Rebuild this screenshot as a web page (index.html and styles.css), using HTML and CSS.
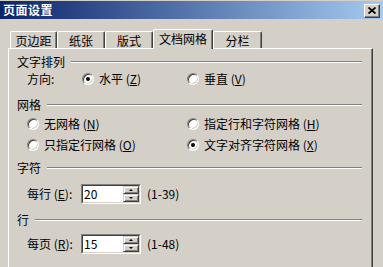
FILE: index.html
```html
<!DOCTYPE html>
<html lang="zh-CN">
<head>
  <meta charset="UTF-8">
  <title>页面设置</title>
  <link rel="stylesheet" href="styles.css">
</head>
<body>
  <div class="dialog">
    <div class="titlebar">
      <span class="title">页面设置</span>
      <span class="close">
        <svg width="8" height="7" viewBox="0 0 8 7"><path d="M0.5 0.5L7.5 6.5M7.5 0.5L0.5 6.5" stroke="#000" stroke-width="1.7"/></svg>
      </span>
    </div>

    <div class="tabs">
      <div class="tab w47">页边距</div>
      <div class="tab w48">纸张</div>
      <div class="tab w48">版式</div>
      <div class="tab active">文档网格</div>
      <div class="tab w49">分栏</div>
    </div>

    <div class="panel">
      <div class="group-head first"><span>文字排列</span><i class="rule"></i></div>
      <div class="row r1">
        <span class="lbl">方向:</span>
        <label class="opt narrow"><span class="radio on"></span><span>水平 (<u>Z</u>)</span></label>
        <label class="opt"><span class="radio"></span><span>垂直 (<u>V</u>)</span></label>
      </div>

      <div class="group-head g2"><span>网格</span><i class="rule"></i></div>
      <div class="row r2">
        <label class="opt wide"><span class="radio"></span><span>无网格 (<u>N</u>)</span></label>
        <label class="opt"><span class="radio"></span><span>指定行和字符网格 (<u>H</u>)</span></label>
      </div>
      <div class="row r2">
        <label class="opt wide"><span class="radio"></span><span>只指定行网格 (<u>O</u>)</span></label>
        <label class="opt"><span class="radio on"></span><span>文字对齐字符网格 (<u>X</u>)</span></label>
      </div>

      <div class="group-head g3"><span>字符</span><i class="rule"></i></div>
      <div class="row num r4">
        <span class="lbl2">每行 (<u>E</u>):</span>
        <div class="spin">
          <div class="spin-inner">
            <span class="val">20</span>
            <div class="arrows"><b class="up"></b><b class="down"></b></div>
          </div>
        </div>
        <span class="range">(1-39)</span>
      </div>

      <div class="group-head g4"><span>行</span><i class="rule"></i></div>
      <div class="row num r5">
        <span class="lbl2">每页 (<u>R</u>):</span>
        <div class="spin">
          <div class="spin-inner">
            <span class="val">15</span>
            <div class="arrows"><b class="up"></b><b class="down"></b></div>
          </div>
        </div>
        <span class="range">(1-48)</span>
      </div>
    </div>
  </div>
</body>
</html>
```

FILE: styles.css
```css
body{
  margin:0;
  background:#d4d0c8;
  font-family:"Noto Sans CJK SC", "Liberation Sans", sans-serif;
  font-size:12px;
  line-height:14px;
  color:#000;
  overflow:hidden;
}
.dialog{
  width:383px;
  height:267px;
}

/* title bar */
.titlebar{
  margin-top:1px;
  height:18px;
  padding-left:3px;
  display:flex;
  align-items:center;
  justify-content:space-between;
  background:linear-gradient(to right, #0a246a, #a6caf0);
}
.title{
  color:#fff;
  font-weight:bold;
  letter-spacing:0.5px;
}
.close{
  width:16px;
  height:14px;
  box-sizing:border-box;
  margin-right:3px;
  margin-top:1px;
  display:flex;
  align-items:center;
  justify-content:center;
  background:#d4d0c8;
  border:1px solid;
  border-color:#fff #404040 #404040 #fff;
  box-shadow:inset -1px -1px #808080;
}

/* tabs */
.tabs{
  margin-top:10px;
  padding-left:10px;
  height:19px;
  display:flex;
  align-items:flex-end;
}
.tab{
  height:17px;
  box-sizing:border-box;
  display:flex;
  align-items:center;
  justify-content:center;
  border-top:1px solid #fff;
  border-left:1px solid #fff;
  border-right:1px solid #404040;
  box-shadow:inset -1px 0 #808080;
  border-radius:2px 2px 0 0;
  padding-top:1px;
}
.w47{ width:47px; }
.w48{ width:48px; }
.w49{ width:49px; }
.tab.active{
  width:60px;
  height:20px;
  margin-bottom:-1px;
  padding-top:0;
  padding-bottom:2px;
  background:#d4d0c8;
  position:relative;
  z-index:1;
}

/* panel */
.panel{
  margin-left:8px;
  width:365px;
  height:230px;
  box-sizing:border-box;
  padding:6px 10px 0 8px;
  border-top:1px solid #fff;
  border-left:1px solid #fff;
  border-right:1px solid #404040;
  box-shadow:inset -1px 0 #808080;
}
.group-head{
  height:14px;
  display:flex;
  align-items:center;
  gap:6px;
}
.rule{
  flex:1;
  height:0;
  border-top:1px solid #808080;
  border-bottom:1px solid #fff;
}
.g2{ margin-top:10px; }
.g3{ margin-top:7px; }
.g4{ margin-top:9px; }

.row{
  height:18px;
  padding-left:10px;
  display:flex;
  align-items:center;
}
.r1{ margin-top:1px; }
.r2{ margin-top:3px; }
.r4{ margin-top:9px; height:20px; }
.r5{ margin-top:7px; height:20px; }

.lbl{ width:55px; }
.lbl2{ width:54px; }
.opt{
  display:flex;
  align-items:center;
  gap:5px;
}
.narrow{ width:105px; }
.wide{ width:160px; }
u{ text-decoration-thickness:1px; text-underline-offset:1px; }

/* radio */
.radio{
  width:12px;
  height:12px;
  box-sizing:border-box;
  border-radius:50%;
  background:#fff;
  border:1px solid;
  border-color:#808080 #fff #fff #808080;
  box-shadow:inset 1px 1px #404040, inset -1px -1px #d4d0c8;
  display:flex;
  align-items:center;
  justify-content:center;
}
.radio.on::after{
  content:"";
  width:4px;
  height:4px;
  border-radius:50%;
  background:#000;
}

/* spin box */
.spin{
  width:60px;
  height:20px;
  box-sizing:border-box;
  border:1px solid;
  border-color:#808080 #fff #fff #808080;
  display:flex;
}
.spin-inner{
  flex:1;
  display:flex;
  background:#fff;
  border:1px solid;
  border-color:#404040 #d4d0c8 #d4d0c8 #404040;
}
.val{
  flex:1;
  padding-left:1px;
  line-height:16px;
}
.arrows{
  width:16px;
  display:flex;
  flex-direction:column;
}
.arrows b{
  height:8px;
  box-sizing:border-box;
  background:#d4d0c8;
  border:1px solid;
  border-color:#d4d0c8 #404040 #404040 #d4d0c8;
  box-shadow:inset 1px 1px #fff, inset -1px -1px #808080;
  display:flex;
  align-items:center;
  justify-content:center;
}
.arrows b::after{
  content:"";
  width:0;
  height:0;
  border-left:2px solid transparent;
  border-right:2px solid transparent;
}
.up::after{ border-bottom:2px solid #000; }
.down::after{ border-top:2px solid #000; }
.range{ margin-left:6px; }
```
